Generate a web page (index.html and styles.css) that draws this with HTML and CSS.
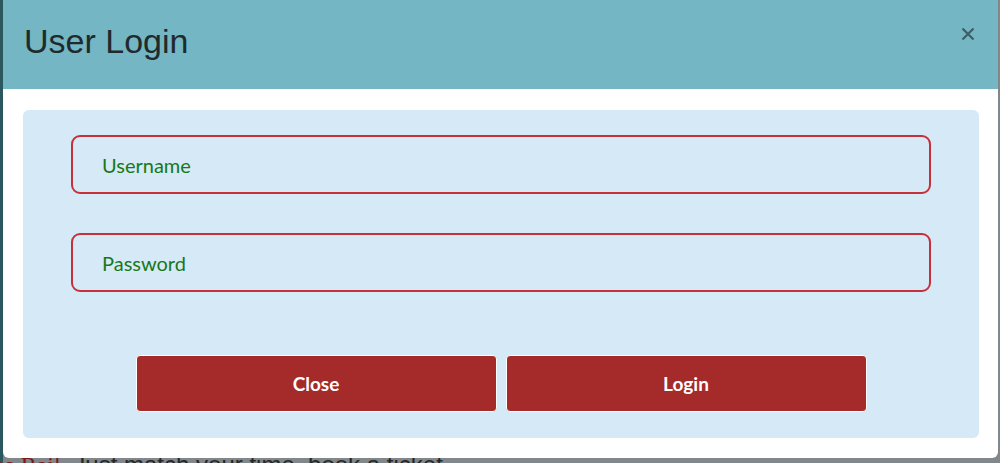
FILE: index.html
```html
<!DOCTYPE html>
<html>
<head>
<meta charset="utf-8">
<link rel="stylesheet" href="styles.css">
</head>
<body>
<div class="page">
  <p class="page-text"><span class="red">ne Rail.</span> Just match your time, book a ticket</p>
</div>
<div class="backdrop"></div>
<div class="modal">
  <div class="modal-header">
    <h4 class="modal-title">User Login</h4>
    <button class="close" aria-label="Close">
      <svg width="14" height="14" viewBox="0 0 14 14"><path d="M1.5 1.5 L12.5 12.5 M12.5 1.5 L1.5 12.5" stroke="#3f5d64" stroke-width="2.2" stroke-linecap="butt"/></svg>
    </button>
  </div>
  <div class="modal-body">
    <form class="panel">
      <input class="field" type="text" placeholder="Username">
      <input class="field" type="password" placeholder="Password">
      <div class="actions">
        <button type="button" class="btn">Close</button>
        <button type="button" class="btn">Login</button>
      </div>
    </form>
  </div>
</div>
</body>
</html>
```

FILE: styles.css
```css
* { box-sizing: border-box; }
html, body { margin: 0; padding: 0; }
body {
  width: 1000px;
  height: 463px;
  overflow: hidden;
  position: relative;
  background: #8c9396;
  font-family: "Liberation Sans", Arial, sans-serif;
}
.page {
  height: 463px;
  display: flex;
  align-items: flex-end;
  background: linear-gradient(90deg, #2f5f66 0, #2f5f66 3px, #8c9396 3px);
}
.page-text {
  margin: 0 0 -14px 0;
  padding-left: 0;
  font-family: "Liberation Sans", Arial, sans-serif;
  font-size: 24px;
  line-height: 1;
  color: #2a2a2a;
  white-space: nowrap;
  transform: translateX(-8px);
}
.page-text .red { color: #8b1a1a; font-family: "Liberation Serif", serif; }
.backdrop {
  position: absolute;
  inset: 0;
  background: rgba(0,0,0,0.08);
}
.modal {
  position: absolute;
  left: 3px;
  top: 0;
  width: 995px;
  height: 458px;
  background: #fff;
  border-radius: 0 0 6px 6px;
  overflow: hidden;
  display: flex;
  flex-direction: column;
}
.modal-header {
  height: 89px;
  background: #74b6c4;
  display: flex;
  align-items: center;
  justify-content: space-between;
  padding: 0 23px 0 21px;
}
.modal-title {
  margin: -8px 0 0 0;
  font-size: 34px;
  font-weight: 400;
  color: #1f2a2e;
  line-height: 1;
}
.close {
  background: none;
  border: 0;
  padding: 0;
  margin-top: -22px;
  width: 14px;
  height: 14px;
  display: flex;
}
.modal-body {
  padding: 21px 19px 20px 20px;
  flex: 1;
  display: flex;
}
.panel {
  flex: 1;
  margin: 0;
  background: #d6e9f6;
  border-radius: 6px;
  padding: 25px 48px 26px 48px;
  display: flex;
  flex-direction: column;
}
.field {
  display: block;
  width: 100%;
  height: 59px;
  border: 2px solid #c6303a;
  border-radius: 9px;
  background: transparent;
  padding: 0 0 0 29px;
  font-family: Lato, "Open Sans", sans-serif;
  font-size: 20px;
  color: #1a7a1f;
  outline: none;
}
.field::placeholder { color: #16781b; opacity: 1; }
.field + .field { margin-top: 39px; }
.actions {
  margin-top: auto;
  display: flex;
  justify-content: center;
  gap: 9px;
}
.btn {
  width: 361px;
  height: 57px;
  background: #a52a2a;
  border: 1px solid #fff;
  border-radius: 4px;
  color: #fff;
  font-family: Lato, "Open Sans", sans-serif;
  font-weight: 700;
  font-size: 19px;
  cursor: pointer;
}
```
